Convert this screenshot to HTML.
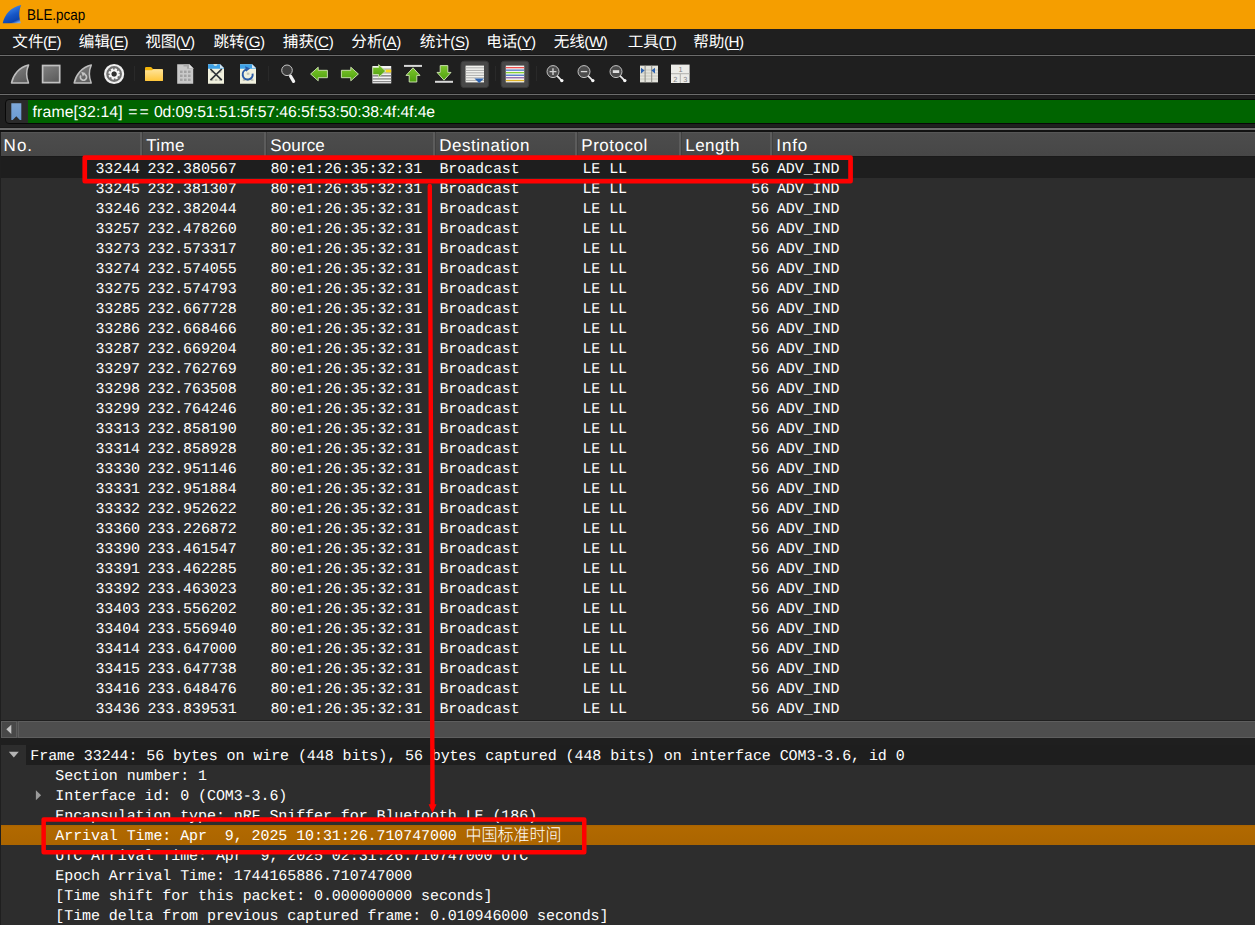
<!DOCTYPE html><html><head><meta charset="utf-8"><title>BLE.pcap</title><style>html,body{margin:0;padding:0}
body{width:1255px;height:925px;background:#1f1f1f;overflow:hidden;position:relative;font-family:"Liberation Sans",sans-serif;color:#fff;text-rendering:geometricPrecision}
div,span{box-sizing:border-box}
.t{position:absolute;white-space:pre;line-height:1}
#title{position:absolute;left:0;top:0;width:1255px;height:29px;background:#f59e00}
#ttl{left:26.5px;top:8.3px;font-size:15.5px;color:#000;transform:scaleX(0.865);transform-origin:0 0;text-rendering:geometricPrecision}
#menubar{position:absolute;left:0;top:29px;width:1255px;height:26px;background:#1f1f1f}
.m{top:35.2px;font-size:15.2px;letter-spacing:-0.45px}
.m u{text-decoration-thickness:1px;text-underline-offset:2px}
.hl{position:absolute;left:0;width:1255px;height:1px;background:#6c6c6c;box-shadow:0 -1px 0 #171717,0 1px 0 #1b1b1b}
.hl2{position:absolute;left:0;width:1255px;height:2px;background:#6c6c6c;box-shadow:0 2px 0 #121212,0 -1px 0 #181818}
#filter{position:absolute;left:5px;top:99px;width:1254px;height:25px;background:#2b2b2b;border:1px solid #080808;border-radius:4px}
#fgreen{position:absolute;left:22px;top:0;right:0;height:23px;background:#006400}
.ft{top:104.7px;font-size:15.8px}
#hdr{position:absolute;left:1px;top:132px;width:1254px;height:24px;background:linear-gradient(#4c4c4c,#474747);border-top:1px solid #565656;box-shadow:0 1px 0 #1a1a1a}
.h{top:136.6px;font-size:17px}
.hd{position:absolute;top:132px;width:2px;height:24px;background:#5c5c5c;box-shadow:1px 0 0 #404040}
#list{position:absolute;left:1px;top:157px;width:1254px;height:563px;background:#2d2d2d;overflow:hidden}
.r,.d{position:absolute;left:0;width:1254px;height:20px}
.r.sel{background:#1e1e1e;box-shadow:0 -1px 0 #1e1e1e}
.c{position:absolute;top:0;font-family:"Liberation Mono",monospace;font-size:15px;letter-spacing:-0.08px;line-height:20px;white-space:pre;color:#fff}
.r .c,.d .c{top:2px}
.no{left:40px;width:99px;text-align:right}
.len{left:680px;width:88.2px;text-align:right}
#sb{position:absolute;left:1px;top:721px;width:1254px;height:17px;background:#4d4d4d}
#sbbtn{position:absolute;left:0;top:0;width:16px;height:17px;background:#484848;border:1px solid #5c5c5c}
#sbsl{position:absolute;left:17px;top:0;right:0;height:17px;background:#4e4e4e;border-top:1px solid #5e5e5e;border-bottom:1px solid #5e5e5e;border-left:1px solid #5e5e5e}
#detail{position:absolute;left:1px;top:745px;width:1254px;height:180px;background:#2d2d2d;overflow:hidden}
.d.top{background:linear-gradient(90deg,#2d2d2d 25px,#1e1e1e 25px)}
.d.hi{background:linear-gradient(#a96200 0,#b16900 2px,#ab6500 100%)}
</style></head><body>
<div id="title"></div>
<svg style="position:absolute;left:2px;top:4px" width="20" height="20" viewBox="0 0 20 20"><defs><linearGradient id="fin" x1="0.3" y1="0" x2="0.75" y2="1"><stop offset="0" stop-color="#4a94f4"/><stop offset="0.55" stop-color="#1656c6"/><stop offset="0.86" stop-color="#0c44ae"/><stop offset="1" stop-color="#7aa8e6"/></linearGradient></defs><path d="M0.7 19.2C2.6 10.2 9 2.8 19.2 0.9C16.6 7 16.9 13 18.9 19.2Z" fill="url(#fin)"/></svg>

<div class="t" id="ttl">BLE.pcap</div>
<div id="menubar"></div>
<svg id="menusvg" width="1255" height="30" viewBox="0 29 1255 30" style="position:absolute;left:0;top:29px"><g font-family='"Liberation Sans", "Noto Sans CJK SC", sans-serif' font-size="15.6" fill="#fff"><text x="12.30" y="47.43">文件</text><text x="78.65" y="47.43">编辑</text><text x="145.15" y="47.43">视图</text><text x="213.45" y="47.43">跳转</text><text x="282.85" y="47.43">捕获</text><text x="351.35" y="47.43">分析</text><text x="419.65" y="47.43">统计</text><text x="486.15" y="47.43">电话</text><text x="553.65" y="47.43">无线</text><text x="627.75" y="47.43">工具</text><text x="693.25" y="47.43">帮助</text></g></svg>
<div class="t m" style="left:42.95px">(<u>F</u>)</div><div class="t m" style="left:109.30px">(<u>E</u>)</div><div class="t m" style="left:175.80px">(<u>V</u>)</div><div class="t m" style="left:244.10px">(<u>G</u>)</div><div class="t m" style="left:313.50px">(<u>C</u>)</div><div class="t m" style="left:382.00px">(<u>A</u>)</div><div class="t m" style="left:450.30px">(<u>S</u>)</div><div class="t m" style="left:516.80px">(<u>Y</u>)</div><div class="t m" style="left:584.30px">(<u>W</u>)</div><div class="t m" style="left:658.40px">(<u>T</u>)</div><div class="t m" style="left:723.90px">(<u>H</u>)</div>
<div class="hl" style="top:55px"></div>
<div class="hl" style="top:94px"></div>
<div class="hl2" style="top:128px"></div>
<svg id="tb" style="position:absolute;left:0;top:56px" width="1255" height="38" viewBox="0 56 1255 38">
<defs>
<linearGradient id="gg" x1="0" y1="0" x2="0.6" y2="1"><stop offset="0" stop-color="#828282"/><stop offset="1" stop-color="#5e5e5e"/></linearGradient>
<linearGradient id="fold" x1="0" y1="0" x2="0" y2="1"><stop offset="0" stop-color="#ffe49a"/><stop offset="1" stop-color="#ffc63a"/></linearGradient>
<linearGradient id="grn" x1="0" y1="0" x2="0" y2="1"><stop offset="0" stop-color="#7cc62c"/><stop offset="1" stop-color="#4fa010"/></linearGradient>
<linearGradient id="grnh" x1="0" y1="0" x2="1" y2="0"><stop offset="0" stop-color="#74c024"/><stop offset="1" stop-color="#58a814"/></linearGradient>
</defs>
<!-- start capture fin -->
<path d="M11.5 83C13.2 74.8 19 67.2 28.6 64.9C26.1 70.6 26.3 77.5 28.5 83Z" fill="url(#gg)" stroke="#bebebe" stroke-width="1.5" stroke-linejoin="round"/>
<!-- stop -->
<rect x="42.6" y="65.5" width="17.1" height="17.1" fill="url(#gg)" stroke="#c2c2c2" stroke-width="1.7"/>
<!-- restart fin -->
<path d="M74.2 83C75.9 74.8 81.7 67.2 91.3 64.9C88.8 70.6 89 77.5 91.2 83Z" fill="url(#gg)" stroke="#bebebe" stroke-width="1.5" stroke-linejoin="round"/>
<path d="M80.9 75.4A3.1 3.1 0 1 0 84.4 74.2" fill="none" stroke="#c4c4c4" stroke-width="1.7"/>
<path d="M81.2 71.8L85.6 73L82.8 76.4Z" fill="#c4c4c4"/>
<!-- options gear -->
<circle cx="114.1" cy="74" r="9" fill="#707070" stroke="#f0f0f0" stroke-width="2.2"/>
<circle cx="114.1" cy="74" r="4.7" fill="none" stroke="#f6f6f6" stroke-width="2.2" stroke-dasharray="2.2 1.49"/>
<circle cx="114.1" cy="74" r="3.5" fill="none" stroke="#f6f6f6" stroke-width="2"/>
<circle cx="114.1" cy="74" r="2.5" fill="#303030"/>
<!-- sep -->
<rect x="134" y="66" width="1" height="15" fill="#292929"/>
<!-- folder -->
<path d="M145 80.2V68.2Q145 67 146.2 67H150.6Q151.4 67 151.9 67.7L152.9 69H161.9Q163 69 163 70.2V80.2Q163 81 162 81H146Q145 81 145 80.2Z" fill="#f2b40a"/>
<path d="M145 80.2V70.3H152L153.2 69.2H162Q163 69.2 163 70.2V80.2Q163 81 162 81H146Q145 81 145 80.2Z" fill="url(#fold)"/>
<!-- file gray -->
<path d="M177.2 64.2H189.2L193.2 68.2V83.8H177.2Z" fill="#c9c9c9"/>
<path d="M177.2 64.2H183.5V66.6H187V68.8H193.2V68.2L189.2 64.2Z" fill="#a8a8a8"/>
<path d="M189.2 64.2V68.2H193.2Z" fill="#e2e2e2"/>
<g fill="#a2a2a2"><rect x="180" y="70.6" width="2.6" height="2.4"/><rect x="184" y="70.6" width="2.6" height="2.4"/><rect x="188" y="70.6" width="2.6" height="2.4"/><rect x="180" y="74.6" width="2.6" height="2.4"/><rect x="184" y="74.6" width="2.6" height="2.4"/><rect x="188" y="74.6" width="2.6" height="2.4"/><rect x="180" y="78.6" width="2.6" height="2.4"/><rect x="184" y="78.6" width="2.6" height="2.4"/><rect x="188" y="78.6" width="2.6" height="2.4"/></g>
<!-- close file -->
<path d="M208 64.2H220L224 68.2V83.8H208Z" fill="#f1f1de"/>
<path d="M208 64.2H220L224 68.2V68.8H208Z" fill="#3ea2e8"/>
<path d="M220 64.2V68.2H224Z" fill="#d6e6f2"/>
<path d="M213.3 64.2A2.2 2.2 0 0 0 217.5 64.2Z" fill="#f1f1de"/>
<g fill="#c4c4b6"><rect x="210.8" y="78.8" width="2.6" height="2.2"/><rect x="214.8" y="78.8" width="2.6" height="2.2"/><rect x="218.8" y="78.8" width="2.6" height="2.2"/><rect x="210.8" y="70.6" width="2.6" height="2.2"/><rect x="218.8" y="70.6" width="2.6" height="2.2"/></g>
<path d="M210.4 69L221.8 80.2M221.8 69L210.4 80.2" stroke="#2e3338" stroke-width="1.7" fill="none"/>
<!-- reload file -->
<path d="M240 64.2H252L256 68.2V83.8H240Z" fill="#f1f1de"/>
<path d="M240 64.2H252L256 68.2V68.8H240Z" fill="#3ea2e8"/>
<path d="M252 64.2V68.2H256Z" fill="#d6e6f2"/>
<g fill="#c4c4b6"><rect x="242.8" y="78.8" width="2.6" height="2.2"/><rect x="246.8" y="78.8" width="2.6" height="2.2"/><rect x="250.8" y="78.8" width="2.6" height="2.2"/><rect x="246.8" y="72.6" width="2.6" height="2.2"/></g>
<path d="M246.6 69.6A5 5 0 1 0 252.6 73.6" fill="none" stroke="#2a5aa6" stroke-width="2"/>
<path d="M245.2 66.2L250.2 68.6L246 71.8Z" fill="#2a5aa6"/>
<!-- sep -->
<rect x="268" y="66" width="1" height="15" fill="#292929"/>
<!-- find -->
<circle cx="287" cy="70.3" r="5.3" fill="#3e3e3e" stroke="#c6c6c6" stroke-width="1"/>
<path d="M290.6 76.2L293.6 81.4" stroke="#f2f2f2" stroke-width="3.2" stroke-linecap="round"/>
<!-- back arrow -->
<path d="M310.6 74L318.2 67.2V70.3H327.4V77.7H318.2V80.8Z" fill="url(#grn)" stroke="#d4e8b8" stroke-width="0.9" stroke-linejoin="round"/>
<!-- fwd arrow -->
<path d="M358.4 74L350.8 67.2V70.3H341.4V77.7H350.8V80.8Z" fill="url(#grn)" stroke="#d4e8b8" stroke-width="0.9" stroke-linejoin="round"/>
<!-- goto -->
<rect x="372.4" y="66" width="18.8" height="17.4" fill="#f4f4f4"/>
<g fill="#8c8c8c"><rect x="372.4" y="68.6" width="18.8" height="1"/><rect x="372.4" y="72.4" width="18.8" height="1"/><rect x="372.4" y="75" width="18.8" height="1.6"/><rect x="372.4" y="78.2" width="18.8" height="1.4"/><rect x="372.4" y="81" width="18.8" height="1.2"/></g>
<rect x="385.6" y="69.6" width="5.6" height="2.8" fill="#f8d820"/>
<path d="M385.6 71L378.6 64.6V67.4H372.8V74.6H378.6V77.4Z" fill="url(#grn)" stroke="#d4e8b8" stroke-width="0.8" stroke-linejoin="round"/>
<!-- go first -->
<rect x="404" y="64.9" width="18" height="2" fill="#d8d8d8"/>
<path d="M413 67.8L420 75.4H416.8V82H409.2V75.4H406Z" fill="url(#grn)" stroke="#d4e8b8" stroke-width="0.9" stroke-linejoin="round"/>
<!-- go last -->
<rect x="435" y="80.8" width="18" height="2" fill="#d8d8d8"/>
<path d="M444 80.2L451 72.4H447.8V65.6H440.2V72.4H437Z" fill="url(#grn)" stroke="#d4e8b8" stroke-width="0.9" stroke-linejoin="round"/>
<!-- autoscroll (checked) -->
<rect x="461" y="61.2" width="27.6" height="26.4" rx="3" fill="#484848" stroke="#3a3a3a" stroke-width="1"/>
<rect x="465.6" y="65.6" width="18.4" height="16.8" fill="#f2f2ee"/>
<g fill="#a4a4a4"><rect x="465.6" y="67.4" width="18.4" height="0.9"/><rect x="465.6" y="69.9" width="18.4" height="0.9"/><rect x="465.6" y="72.4" width="18.4" height="0.9"/><rect x="465.6" y="74.9" width="18.4" height="0.9"/><rect x="465.6" y="77.4" width="18.4" height="0.9"/><rect x="465.6" y="79.9" width="18.4" height="0.9"/></g>
<path d="M474.4 78.4H484L479.2 83Z" fill="#2c62b0"/>
<!-- sep -->
<rect x="495" y="66" width="1" height="15" fill="#292929"/>
<!-- colorize (checked) -->
<rect x="501.2" y="61.2" width="27.6" height="26.4" rx="3" fill="#484848" stroke="#3a3a3a" stroke-width="1"/>
<rect x="505.8" y="65.6" width="18.4" height="16.8" fill="#f6f6f4"/>
<rect x="505.8" y="67" width="18.4" height="1.3" fill="#f05050"/>
<rect x="505.8" y="69.5" width="18.4" height="1.3" fill="#4a78c8"/>
<rect x="505.8" y="72" width="18.4" height="1.3" fill="#86d036"/>
<rect x="505.8" y="74.6" width="18.4" height="1.3" fill="#4a78c8"/>
<rect x="505.8" y="77.1" width="18.4" height="1.3" fill="#8a64a8"/>
<rect x="505.8" y="79.9" width="18.4" height="1.3" fill="#e0b428"/>
<!-- sep -->
<rect x="536" y="66" width="1" height="15" fill="#292929"/>
<!-- zoom in -->
<g id="mag"><circle cx="553" cy="71.6" r="6" fill="#4c4c4c" stroke="#c2c2c2" stroke-width="1"/><path d="M557.6 76.4L562.0 80.8" stroke="#e8e8e8" stroke-width="1.8" stroke-linecap="round"/><circle cx="561.8" cy="80.6" r="1.7" fill="#f6f6f6"/></g>
<path d="M549.6 71.6H556.4M553 68.2V75" stroke="#d0d0d0" stroke-width="1.4"/>
<!-- zoom out -->
<circle cx="584" cy="71.6" r="6" fill="#4c4c4c" stroke="#c2c2c2" stroke-width="1"/><path d="M588.6 76.4L593.0 80.8" stroke="#e8e8e8" stroke-width="1.8" stroke-linecap="round"/><circle cx="592.8" cy="80.6" r="1.7" fill="#f6f6f6"/>
<path d="M580.8 71.6H587.2" stroke="#d8d8d8" stroke-width="1.3"/>
<!-- zoom reset -->
<circle cx="616" cy="71.6" r="6" fill="#4c4c4c" stroke="#c2c2c2" stroke-width="1"/><path d="M620.6 76.4L625.0 80.8" stroke="#e8e8e8" stroke-width="1.8" stroke-linecap="round"/><circle cx="624.8" cy="80.6" r="1.7" fill="#f6f6f6"/>
<rect x="612.8" y="70.2" width="6.4" height="2.8" fill="#e0e0e0"/>
<!-- resize cols -->
<rect x="640" y="65.6" width="18" height="16.8" fill="#e4e4dc"/>
<g fill="#bdbdb4"><rect x="640" y="69.6" width="18" height="0.8"/><rect x="640" y="72.6" width="18" height="0.8"/><rect x="640" y="75.6" width="18" height="0.8"/><rect x="640" y="78.6" width="18" height="0.8"/></g>
<rect x="644.6" y="65.6" width="1" height="16.8" fill="#8a8a84"/><rect x="651.2" y="65.6" width="1" height="16.8" fill="#8a8a84"/>
<path d="M641 67.8L644.6 70.6L641 73.4Z" fill="#2c62b0"/><path d="M655 67.8L651.4 70.6L655 73.4Z" fill="#2c62b0"/>
<!-- layout -->
<rect x="671" y="64.6" width="18.6" height="18.4" fill="#ecece8"/>
<rect x="671" y="73.2" width="18.6" height="1" fill="#b0b0ac"/><rect x="679.8" y="74" width="1" height="9" fill="#b0b0ac"/>
<g font-family="Liberation Sans, sans-serif" text-rendering="geometricPrecision" font-size="7.4" fill="#828282" text-anchor="middle"><text x="680.6" y="71.9">1</text><text x="675.4" y="81.5">2</text><text x="685.2" y="81.5">3</text></g>
</svg>

<div id="filter"><div id="fgreen"></div></div>
<svg style="position:absolute;left:11px;top:103px" width="11" height="18" viewBox="0 0 11 18"><defs><linearGradient id="bm" x1="0" y1="0" x2="0" y2="1"><stop offset="0" stop-color="#7fa9da"/><stop offset="1" stop-color="#6a9bd4"/></linearGradient></defs><path d="M0.3 0.3H10.3V17H8.9L5.3 13.3L1.7 17H0.3Z" fill="url(#bm)"/></svg>
<div class="t ft" style="left:32.6px;letter-spacing:0.118px">frame[32:14]</div>
<div class="t ft" style="left:128.2px;letter-spacing:2.146px">==</div>
<div class="t ft" style="left:153.9px;letter-spacing:-0.105px">0d:09:51:51:5f:57:46:5f:53:50:38:4f:4f:4e</div>
<div id="hdr"></div>
<div class="t h" style="left:3.6px;letter-spacing:1.02px">No.</div>
<div class="t h" style="left:146.3px;letter-spacing:0.31px">Time</div>
<div class="hd" style="left:140px"></div>
<div class="t h" style="left:270.3px;letter-spacing:0.12px">Source</div>
<div class="hd" style="left:264px"></div>
<div class="t h" style="left:439.3px;letter-spacing:0.50px">Destination</div>
<div class="hd" style="left:433px"></div>
<div class="t h" style="left:581.3px;letter-spacing:0.53px">Protocol</div>
<div class="hd" style="left:575px"></div>
<div class="t h" style="left:685.3px;letter-spacing:0.43px">Length</div>
<div class="hd" style="left:679px"></div>
<div class="t h" style="left:776.3px;letter-spacing:0.86px">Info</div>
<div class="hd" style="left:770px"></div>
<div id="list">
<div class="r sel" style="top:1px"><span class="c no">33244</span><span class="c" style="left:146.4px">232.380567</span><span class="c" style="left:269.4px">80:e1:26:35:32:31</span><span class="c" style="left:438.4px">Broadcast</span><span class="c" style="left:581.4px">LE LL</span><span class="c len">56</span><span class="c" style="left:775.9px">ADV_IND</span></div>
<div class="r" style="top:21px"><span class="c no">33245</span><span class="c" style="left:146.4px">232.381307</span><span class="c" style="left:269.4px">80:e1:26:35:32:31</span><span class="c" style="left:438.4px">Broadcast</span><span class="c" style="left:581.4px">LE LL</span><span class="c len">56</span><span class="c" style="left:775.9px">ADV_IND</span></div>
<div class="r" style="top:41px"><span class="c no">33246</span><span class="c" style="left:146.4px">232.382044</span><span class="c" style="left:269.4px">80:e1:26:35:32:31</span><span class="c" style="left:438.4px">Broadcast</span><span class="c" style="left:581.4px">LE LL</span><span class="c len">56</span><span class="c" style="left:775.9px">ADV_IND</span></div>
<div class="r" style="top:61px"><span class="c no">33257</span><span class="c" style="left:146.4px">232.478260</span><span class="c" style="left:269.4px">80:e1:26:35:32:31</span><span class="c" style="left:438.4px">Broadcast</span><span class="c" style="left:581.4px">LE LL</span><span class="c len">56</span><span class="c" style="left:775.9px">ADV_IND</span></div>
<div class="r" style="top:81px"><span class="c no">33273</span><span class="c" style="left:146.4px">232.573317</span><span class="c" style="left:269.4px">80:e1:26:35:32:31</span><span class="c" style="left:438.4px">Broadcast</span><span class="c" style="left:581.4px">LE LL</span><span class="c len">56</span><span class="c" style="left:775.9px">ADV_IND</span></div>
<div class="r" style="top:101px"><span class="c no">33274</span><span class="c" style="left:146.4px">232.574055</span><span class="c" style="left:269.4px">80:e1:26:35:32:31</span><span class="c" style="left:438.4px">Broadcast</span><span class="c" style="left:581.4px">LE LL</span><span class="c len">56</span><span class="c" style="left:775.9px">ADV_IND</span></div>
<div class="r" style="top:121px"><span class="c no">33275</span><span class="c" style="left:146.4px">232.574793</span><span class="c" style="left:269.4px">80:e1:26:35:32:31</span><span class="c" style="left:438.4px">Broadcast</span><span class="c" style="left:581.4px">LE LL</span><span class="c len">56</span><span class="c" style="left:775.9px">ADV_IND</span></div>
<div class="r" style="top:141px"><span class="c no">33285</span><span class="c" style="left:146.4px">232.667728</span><span class="c" style="left:269.4px">80:e1:26:35:32:31</span><span class="c" style="left:438.4px">Broadcast</span><span class="c" style="left:581.4px">LE LL</span><span class="c len">56</span><span class="c" style="left:775.9px">ADV_IND</span></div>
<div class="r" style="top:161px"><span class="c no">33286</span><span class="c" style="left:146.4px">232.668466</span><span class="c" style="left:269.4px">80:e1:26:35:32:31</span><span class="c" style="left:438.4px">Broadcast</span><span class="c" style="left:581.4px">LE LL</span><span class="c len">56</span><span class="c" style="left:775.9px">ADV_IND</span></div>
<div class="r" style="top:181px"><span class="c no">33287</span><span class="c" style="left:146.4px">232.669204</span><span class="c" style="left:269.4px">80:e1:26:35:32:31</span><span class="c" style="left:438.4px">Broadcast</span><span class="c" style="left:581.4px">LE LL</span><span class="c len">56</span><span class="c" style="left:775.9px">ADV_IND</span></div>
<div class="r" style="top:201px"><span class="c no">33297</span><span class="c" style="left:146.4px">232.762769</span><span class="c" style="left:269.4px">80:e1:26:35:32:31</span><span class="c" style="left:438.4px">Broadcast</span><span class="c" style="left:581.4px">LE LL</span><span class="c len">56</span><span class="c" style="left:775.9px">ADV_IND</span></div>
<div class="r" style="top:221px"><span class="c no">33298</span><span class="c" style="left:146.4px">232.763508</span><span class="c" style="left:269.4px">80:e1:26:35:32:31</span><span class="c" style="left:438.4px">Broadcast</span><span class="c" style="left:581.4px">LE LL</span><span class="c len">56</span><span class="c" style="left:775.9px">ADV_IND</span></div>
<div class="r" style="top:241px"><span class="c no">33299</span><span class="c" style="left:146.4px">232.764246</span><span class="c" style="left:269.4px">80:e1:26:35:32:31</span><span class="c" style="left:438.4px">Broadcast</span><span class="c" style="left:581.4px">LE LL</span><span class="c len">56</span><span class="c" style="left:775.9px">ADV_IND</span></div>
<div class="r" style="top:261px"><span class="c no">33313</span><span class="c" style="left:146.4px">232.858190</span><span class="c" style="left:269.4px">80:e1:26:35:32:31</span><span class="c" style="left:438.4px">Broadcast</span><span class="c" style="left:581.4px">LE LL</span><span class="c len">56</span><span class="c" style="left:775.9px">ADV_IND</span></div>
<div class="r" style="top:281px"><span class="c no">33314</span><span class="c" style="left:146.4px">232.858928</span><span class="c" style="left:269.4px">80:e1:26:35:32:31</span><span class="c" style="left:438.4px">Broadcast</span><span class="c" style="left:581.4px">LE LL</span><span class="c len">56</span><span class="c" style="left:775.9px">ADV_IND</span></div>
<div class="r" style="top:301px"><span class="c no">33330</span><span class="c" style="left:146.4px">232.951146</span><span class="c" style="left:269.4px">80:e1:26:35:32:31</span><span class="c" style="left:438.4px">Broadcast</span><span class="c" style="left:581.4px">LE LL</span><span class="c len">56</span><span class="c" style="left:775.9px">ADV_IND</span></div>
<div class="r" style="top:321px"><span class="c no">33331</span><span class="c" style="left:146.4px">232.951884</span><span class="c" style="left:269.4px">80:e1:26:35:32:31</span><span class="c" style="left:438.4px">Broadcast</span><span class="c" style="left:581.4px">LE LL</span><span class="c len">56</span><span class="c" style="left:775.9px">ADV_IND</span></div>
<div class="r" style="top:341px"><span class="c no">33332</span><span class="c" style="left:146.4px">232.952622</span><span class="c" style="left:269.4px">80:e1:26:35:32:31</span><span class="c" style="left:438.4px">Broadcast</span><span class="c" style="left:581.4px">LE LL</span><span class="c len">56</span><span class="c" style="left:775.9px">ADV_IND</span></div>
<div class="r" style="top:361px"><span class="c no">33360</span><span class="c" style="left:146.4px">233.226872</span><span class="c" style="left:269.4px">80:e1:26:35:32:31</span><span class="c" style="left:438.4px">Broadcast</span><span class="c" style="left:581.4px">LE LL</span><span class="c len">56</span><span class="c" style="left:775.9px">ADV_IND</span></div>
<div class="r" style="top:381px"><span class="c no">33390</span><span class="c" style="left:146.4px">233.461547</span><span class="c" style="left:269.4px">80:e1:26:35:32:31</span><span class="c" style="left:438.4px">Broadcast</span><span class="c" style="left:581.4px">LE LL</span><span class="c len">56</span><span class="c" style="left:775.9px">ADV_IND</span></div>
<div class="r" style="top:401px"><span class="c no">33391</span><span class="c" style="left:146.4px">233.462285</span><span class="c" style="left:269.4px">80:e1:26:35:32:31</span><span class="c" style="left:438.4px">Broadcast</span><span class="c" style="left:581.4px">LE LL</span><span class="c len">56</span><span class="c" style="left:775.9px">ADV_IND</span></div>
<div class="r" style="top:421px"><span class="c no">33392</span><span class="c" style="left:146.4px">233.463023</span><span class="c" style="left:269.4px">80:e1:26:35:32:31</span><span class="c" style="left:438.4px">Broadcast</span><span class="c" style="left:581.4px">LE LL</span><span class="c len">56</span><span class="c" style="left:775.9px">ADV_IND</span></div>
<div class="r" style="top:441px"><span class="c no">33403</span><span class="c" style="left:146.4px">233.556202</span><span class="c" style="left:269.4px">80:e1:26:35:32:31</span><span class="c" style="left:438.4px">Broadcast</span><span class="c" style="left:581.4px">LE LL</span><span class="c len">56</span><span class="c" style="left:775.9px">ADV_IND</span></div>
<div class="r" style="top:461px"><span class="c no">33404</span><span class="c" style="left:146.4px">233.556940</span><span class="c" style="left:269.4px">80:e1:26:35:32:31</span><span class="c" style="left:438.4px">Broadcast</span><span class="c" style="left:581.4px">LE LL</span><span class="c len">56</span><span class="c" style="left:775.9px">ADV_IND</span></div>
<div class="r" style="top:481px"><span class="c no">33414</span><span class="c" style="left:146.4px">233.647000</span><span class="c" style="left:269.4px">80:e1:26:35:32:31</span><span class="c" style="left:438.4px">Broadcast</span><span class="c" style="left:581.4px">LE LL</span><span class="c len">56</span><span class="c" style="left:775.9px">ADV_IND</span></div>
<div class="r" style="top:501px"><span class="c no">33415</span><span class="c" style="left:146.4px">233.647738</span><span class="c" style="left:269.4px">80:e1:26:35:32:31</span><span class="c" style="left:438.4px">Broadcast</span><span class="c" style="left:581.4px">LE LL</span><span class="c len">56</span><span class="c" style="left:775.9px">ADV_IND</span></div>
<div class="r" style="top:521px"><span class="c no">33416</span><span class="c" style="left:146.4px">233.648476</span><span class="c" style="left:269.4px">80:e1:26:35:32:31</span><span class="c" style="left:438.4px">Broadcast</span><span class="c" style="left:581.4px">LE LL</span><span class="c len">56</span><span class="c" style="left:775.9px">ADV_IND</span></div>
<div class="r" style="top:541px"><span class="c no">33436</span><span class="c" style="left:146.4px">233.839531</span><span class="c" style="left:269.4px">80:e1:26:35:32:31</span><span class="c" style="left:438.4px">Broadcast</span><span class="c" style="left:581.4px">LE LL</span><span class="c len">56</span><span class="c" style="left:775.9px">ADV_IND</span></div>
</div>
<div id="sb"><div id="sbbtn"></div><div id="sbsl"></div></div>
<svg style="position:absolute;left:6px;top:724px" width="6" height="11" viewBox="0 0 6 11"><path d="M5.3 0.8V9.9L0.3 5.35Z" fill="#c4c4c4"/></svg>
<div id="detail">
<div class="d top" style="top:0px"><span class="c" style="left:29.3px">Frame 33244: 56 bytes on wire (448 bits), 56 bytes captured (448 bits) on interface COM3-3.6, id 0</span></div>
<div class="d " style="top:20px"><span class="c" style="left:54.3px">Section number: 1</span></div>
<div class="d " style="top:40px"><span class="c" style="left:54.3px">Interface id: 0 (COM3-3.6)</span></div>
<div class="d " style="top:60px"><span class="c" style="left:54.3px">Encapsulation type: nRF Sniffer for Bluetooth LE (186)</span></div>
<div class="d hi" style="top:80px"><span class="c" style="left:54.3px">Arrival Time: Apr  9, 2025 10:31:26.710747000 </span></div>
<div class="d " style="top:100px"><span class="c" style="left:54.3px">UTC Arrival Time: Apr  9, 2025 02:31:26.710747000 UTC</span></div>
<div class="d " style="top:120px"><span class="c" style="left:54.3px">Epoch Arrival Time: 1744165886.710747000</span></div>
<div class="d " style="top:140px"><span class="c" style="left:54.3px">[Time shift for this packet: 0.000000000 seconds]</span></div>
<div class="d " style="top:160px"><span class="c" style="left:54.3px">[Time delta from previous captured frame: 0.010946000 seconds]</span></div>
</div>
<svg style="position:absolute;left:8px;top:751px" width="12" height="8" viewBox="0 0 12 8"><path d="M0.8 0.8H10.8L5.8 6.4Z" fill="#b4b4b4"/></svg>
<svg style="position:absolute;left:35px;top:790px" width="7" height="11" viewBox="0 0 7 11"><path d="M0.9 0.3L6.1 5.2L0.9 10.2Z" fill="#9a9a9a"/></svg>
<svg style="position:absolute;left:0;top:820px" width="1255" height="30" viewBox="0 820 1255 30"><text transform="translate(465.60,840.88) scale(1,1.1)" x="0" y="0" font-family='"Liberation Mono", "Noto Sans CJK SC", monospace' font-size="16" font-weight="300" fill="#fff">中国标准时间</text></svg>
<svg id="annot" style="position:absolute;left:0;top:0" width="1255" height="925" viewBox="0 0 1255 925" fill="none" stroke="#ff0000" stroke-linejoin="round">
<rect x="84.75" y="157.55" width="765.8" height="23.7" stroke-width="4.7"/>
<rect x="43.65" y="819.55" width="540.6" height="32.8" stroke-width="4.5"/>
<line x1="429.8" y1="186" x2="432.6" y2="806" stroke-width="4.4" stroke-linecap="round"/>
<path d="M428.6 804.2H436.5L432.5 813.3Z" fill="#ff0000" stroke="none"/>
</svg>

</body></html>
